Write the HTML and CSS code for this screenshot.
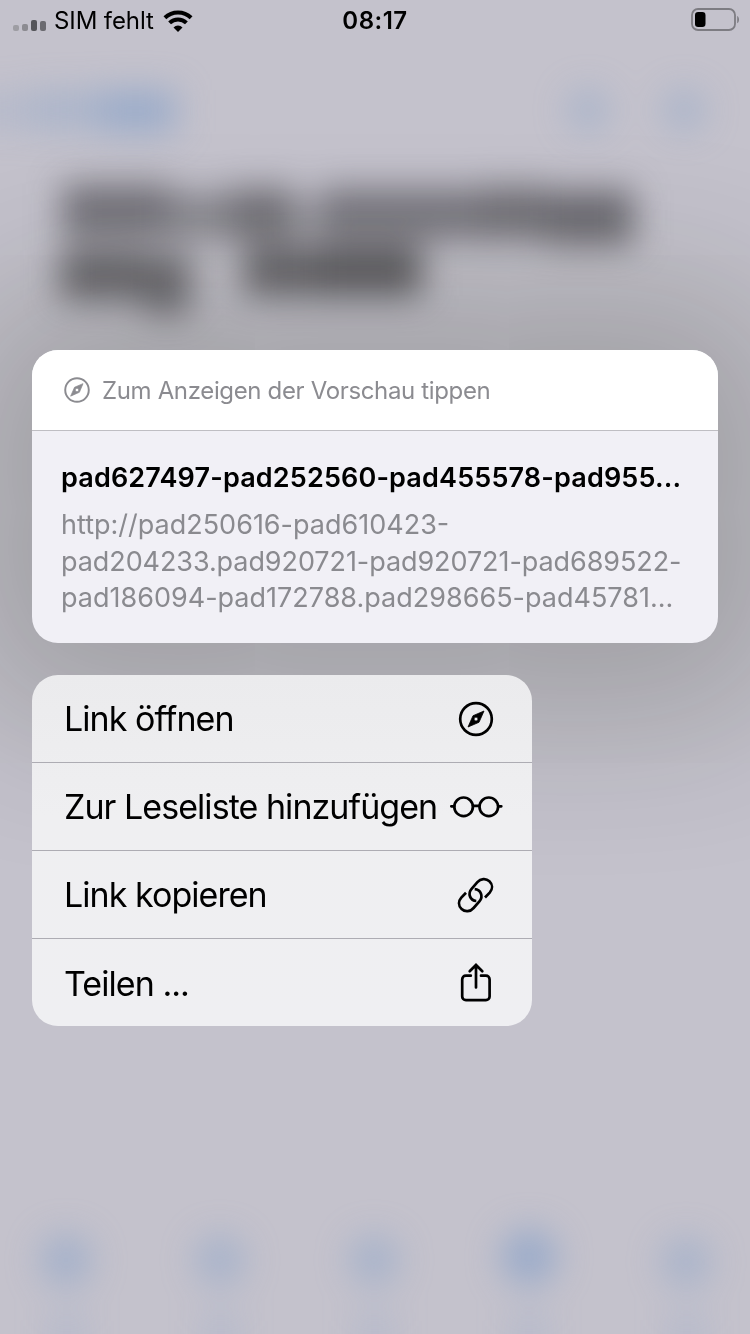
FILE: index.html
```html
<!DOCTYPE html>
<html lang="de">
<head>
<meta charset="utf-8">
<title>Link-Vorschau</title>
<link rel="stylesheet" href="styles.css">
</head>
<body>
<main class="screen">
  <svg class="backdrop" viewBox="0 0 750 1334" aria-hidden="true">
    <defs>
      <filter id="soft" x="-50%" y="-100%" width="200%" height="300%" color-interpolation-filters="sRGB"><feGaussianBlur stdDeviation="17"/></filter>
    </defs>
    <g filter="url(#soft)" fill="#7f9dc8">
      <rect x="-40" y="92" width="70" height="38" opacity=".2"/>
      <rect x="30" y="90" width="70" height="40" opacity=".36"/>
      <rect x="100" y="90" width="76" height="42" opacity=".6"/>
      <circle cx="588" cy="110" r="21" opacity=".38"/>
      <circle cx="684" cy="110" r="21" opacity=".38"/>
      <circle cx="66" cy="1260" r="26" opacity=".47"/>
      <circle cx="220" cy="1260" r="25" opacity=".42"/>
      <circle cx="374" cy="1260" r="25" opacity=".42"/>
      <circle cx="529" cy="1257" r="28" opacity=".62"/>
      <circle cx="686" cy="1262" r="25" opacity=".4"/>
      <path d="M50 1310h34v70H50zM204 1310h34v70h-34zM358 1310h34v70h-34zM512 1310h34v70h-34zM670 1310h34v70h-34z" opacity=".2"/>
    </g>
    <g filter="url(#soft)" fill="#4c4b50">
      <rect x="62" y="184" width="108" height="54" opacity=".66"/>
      <rect x="170" y="192" width="60" height="48" opacity=".48"/>
      <rect x="230" y="188" width="64" height="52" opacity=".68"/>
      <rect x="294" y="200" width="26" height="36" opacity=".3"/>
      <rect x="320" y="188" width="160" height="52" opacity=".62"/>
      <rect x="480" y="186" width="66" height="54" opacity=".68"/>
      <rect x="546" y="190" width="88" height="56" opacity=".72"/>
      <rect x="60" y="250" width="84" height="50" opacity=".75"/>
      <rect x="144" y="254" width="46" height="60" opacity=".72"/>
      <rect x="244" y="246" width="72" height="50" opacity=".76"/>
      <rect x="316" y="246" width="106" height="50" opacity=".84"/>
    </g>
  </svg>

  <header class="status">
    <div class="carrier">
      <svg class="signal" viewBox="0 0 34 12" aria-hidden="true">
        <rect x="0" y="6" width="6" height="6" rx="2" fill="#9e9da3"/>
        <rect x="9" y="5" width="6" height="7" rx="2" fill="#8c8b91"/>
        <rect x="18" y="1" width="6" height="11" rx="2" fill="#55555a"/>
        <rect x="27" y="2" width="6" height="10" rx="2" fill="#6b6a70"/>
      </svg>
      <span>SIM fehlt</span>
      <svg class="wifi" viewBox="0 0 30 22" aria-hidden="true">
        <path d="M1.900 7.700a18.800 18.800 0 0 1 26.200 0M6.600 12.900a12 12 0 0 1 16.800 0" fill="none" stroke="#000" stroke-width="4"/>
        <path d="M15 22l-4.500-4.600a6.300 6.300 0 0 1 9 0z"/>
      </svg>
    </div>
    <time class="clock">08:17</time>
    <svg class="battery" viewBox="0 0 50 24" aria-hidden="true">
      <rect x="1" y="1" width="43" height="21" rx="6" fill="none" stroke="#7d7c82" stroke-width="1.8"/>
      <rect x="4" y="4" width="10.500" height="15" rx="3.200"/>
      <path d="M46.200 8c2.400 1 2.400 6.200 0 7.200z" fill="#7d7c82"/>
    </svg>
  </header>

  <section class="preview">
    <div class="preview-hint">
      <svg class="hint-icon" viewBox="0 0 36 36" aria-hidden="true">
        <circle cx="18" cy="18" r="16.300" fill="none" stroke="currentColor" stroke-width="2.700"/>
        <path fill="currentColor" fill-rule="evenodd" d="M26.300 9.200L14.600 14.200 9.200 26.500 21.300 21.200zM18 15.500a2.500 2.500 0 1 0 0 5 2.500 2.500 0 0 0 0-5z" stroke="currentColor" stroke-linejoin="round"/>
      </svg>
      <span>Zum Anzeigen der Vorschau tippen</span>
    </div>
    <div class="preview-body">
      <h1 class="link-title">pad627497-pad252560-pad455578-pad955...</h1>
      <p class="link-url"><span>http://pad250616-pad610423-</span><span class="url-host">pad204233.pad920721-pad920721-pad689522-</span><span>pad186094-pad172788.pad298665-pad45781...</span></p>
    </div>
  </section>

  <nav class="menu">
    <div class="item"><span>Link öffnen</span>
      <svg class="icon" viewBox="0 0 56 44" aria-hidden="true">
        <circle cx="28" cy="22" r="15.800" fill="none" stroke="#000" stroke-width="2.700"/>
        <path fill-rule="evenodd" d="M36 14L25 18.700 20 30 31 25.300zM28 20.100a2 2 0 1 0 0 4 2 2 0 0 0 0-4z" stroke="#000" stroke-width=".8" stroke-linejoin="round"/>
      </svg>
    </div>
    <div class="item"><span>Zur Leseliste hinzufügen</span>
      <svg class="icon" viewBox="0 0 56 44" aria-hidden="true">
        <g fill="none" stroke="#000" stroke-width="2.700"><circle cx="15.600" cy="21.800" r="9.300"/><circle cx="40.800" cy="21.800" r="9.300"/><path d="M25 20.800h6.400M3.300 21.300h3M50.300 21.300h3" stroke-linecap="round"/></g>
      </svg>
    </div>
    <div class="item"><span>Link kopieren</span>
      <svg class="icon" viewBox="0 0 56 44" aria-hidden="true">
        <g fill="none" stroke="#000" stroke-width="2.700">
          <path d="M26.700 16.200c6 .3 9 7.300 4.700 12.200L25.600 35c-3.300 3.800-8.500 4.200-12 1-3.500-3.300-3.300-8-.3-11.400L18 19.700"/>
          <path d="M28.300 28c-6-.3-9-7.300-4.700-12.200L29.400 9.200c3.300-3.800 8.500-4.200 12-1 3.500 3.300 3.300 8 .3 11.400L37 24.500"/>
        </g>
      </svg>
    </div>
    <div class="item"><span>Teilen ...</span>
      <svg class="icon" viewBox="0 0 56 44" aria-hidden="true">
        <path d="M22.800 14.700h-4.900a3.700 3.700 0 0 0-3.700 3.700v17a3.700 3.700 0 0 0 3.700 3.700h20a3.700 3.700 0 0 0 3.700-3.700v-17a3.700 3.700 0 0 0-3.700-3.700H33M28 26.500V4.300M21.700 10.300L28 4l6.300 6.300" fill="none" stroke="#000" stroke-width="2.700" stroke-linecap="round"/>
      </svg>
    </div>
  </nav>
</main>
</body>
</html>
```
FILE: styles.css
```css
* { box-sizing: border-box; }
body { margin: 0; }
.screen {
  position: relative;
  width: 750px;
  height: 1334px;
  overflow: hidden;
  background: #c4c2cc;
  font-family: Inter, "Liberation Sans", sans-serif;
  color: #000;
  white-space: nowrap;
}
.backdrop { position: absolute; inset: 0; width: 750px; height: 1334px; }

.status {
  position: relative;
  display: grid;
  grid-template-columns: 1fr auto 1fr;
  height: 41px;
  padding: 0 10px 0 13px;
  align-items: center;
  font-size: 24px;
}
.carrier { display: flex; align-items: center; }
.signal { width: 34px; height: 12px; margin: 8px 7px 0 0; }
.carrier span { letter-spacing: -.1px; }
.wifi { width: 30px; height: 22px; margin-left: 9px; }
.clock { margin-right: 3px; font-weight: 600; letter-spacing: .5px; }
.battery { width: 50px; height: 24px; margin: -2px -1px 0 0; justify-self: end; }

.preview {
  position: relative;
  width: 686px;
  height: 293px;
  margin: 309px 0 0 32px;
  border-radius: 26px;
  background: #f1f0f6;
  box-shadow: 0 8px 160px 70px rgba(26, 30, 10, .2);
}
.preview-hint {
  display: flex;
  align-items: center;
  gap: 12px;
  height: 81px;
  padding: 0 32px;
  border-bottom: 1px solid #bfbec3;
  border-radius: 26px 26px 0 0;
  background: #fff;
  color: #8b8b90;
  font-size: 24px;
  letter-spacing: -.35px;
}
.hint-icon { width: 26px; height: 26px; }
.preview-body { padding: 28px 29px 0; }
.link-title { margin: 0; font-size: 27px; line-height: 37px; font-weight: 600; letter-spacing: .15px; }
.link-url {
  display: flex;
  flex-direction: column;
  align-items: flex-start;
  margin: 11px 0 0;
  color: #8a8a8f;
  font-size: 27px;
  line-height: 36.600px;
}
.url-host { letter-spacing: -.08px; }

.menu {
  position: relative;
  width: 500px;
  height: 351px;
  margin: 32px 0 0 32px;
  border-radius: 26px;
  overflow: hidden;
  background: linear-gradient(#ebebed, #efeff1 40%, #efeff2);
}
.item {
  display: flex;
  align-items: center;
  justify-content: space-between;
  height: 88px;
  padding: 0 28.500px 0 32px;
  border-bottom: 1px solid #adacb3;
  font-size: 34px;
  letter-spacing: -.95px;
}
.item:last-child { border-bottom: 0; }
.icon { width: 56px; height: 44px; flex: none; }
```
